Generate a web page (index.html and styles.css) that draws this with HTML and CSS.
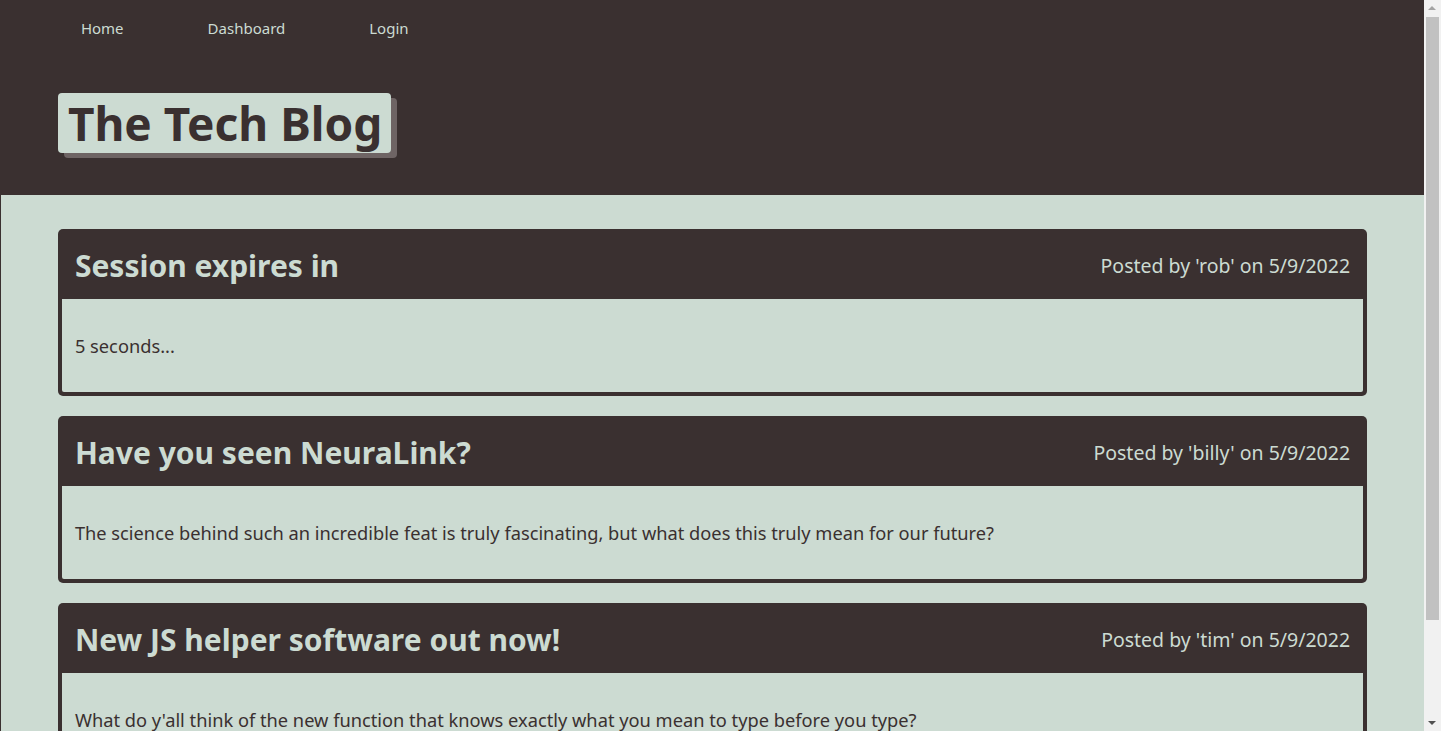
FILE: index.html
```html
<!DOCTYPE html>
<html lang="en">
<head>
<meta charset="utf-8">
<title>The Tech Blog</title>
<link rel="stylesheet" href="styles.css">
</head>
<body>
<div class="page">
  <header class="site-header">
    <nav class="nav">
      <a class="nav-link" href="#">Home</a>
      <a class="nav-link" href="#">Dashboard</a>
      <a class="nav-link" href="#">Login</a>
    </nav>
    <h1 class="brand">The Tech Blog</h1>
  </header>
  <main class="posts">
    <article class="post">
      <div class="post-head">
        <h2 class="post-title">Session expires in</h2>
        <span class="post-meta">Posted by 'rob' on 5/9/2022</span>
      </div>
      <div class="post-body"><p>5 seconds...</p></div>
    </article>
    <article class="post">
      <div class="post-head">
        <h2 class="post-title">Have you seen NeuraLink?</h2>
        <span class="post-meta">Posted by 'billy' on 5/9/2022</span>
      </div>
      <div class="post-body"><p>The science behind such an incredible feat is truly fascinating, but what does this truly mean for our future?</p></div>
    </article>
    <article class="post">
      <div class="post-head">
        <h2 class="post-title">New JS helper software out now!</h2>
        <span class="post-meta">Posted by 'tim' on 5/9/2022</span>
      </div>
      <div class="post-body"><p>What do y'all think of the new function that knows exactly what you mean to type before you type?</p></div>
    </article>
  </main>
</div>
<div class="scrollbar" aria-hidden="true">
  <div class="sb-arrow sb-up"></div>
  <div class="sb-track"><div class="sb-thumb"></div></div>
  <div class="sb-arrow sb-down"></div>
</div>
</body>
</html>
```
FILE: styles.css
```css
* { box-sizing: border-box; }
html, body { margin: 0; padding: 0; }
body {
  background: #ccdbd2;
  font-family: "Noto Sans", "Open Sans", sans-serif;
  color: #3a3030;
  padding-right: 17px;
}
.page {
  border-left: 1px solid #3a3030;
  min-height: 845px;
}
.site-header {
  background: #3a3030;
  height: 195px;
  padding: 0 4%;
}
.nav {
  display: flex;
  padding-top: 18px;
  padding-left: 23px;
}
.nav-link {
  color: #ccdbd2;
  text-decoration: none;
  font-size: 15px;
  line-height: 20px;
  margin-right: 84px;
}
.brand {
  display: inline-block;
  margin: 55px 0 0 0;
  background: #ccdbd2;
  color: #3a3030;
  font-size: 46px;
  line-height: 60px;
  font-weight: 700;
  padding: 0 9px 0 10px;
  border-radius: 4px;
  box-shadow: 6px 5px 0 #6e6464;
}
.posts {
  padding: 34px 4% 75px;
  display: flex;
  flex-direction: column;
  gap: 20px;
}
.post {
  border-radius: 5px;
  overflow: hidden;
  background: #3a3030;
}
.post-head {
  height: 70px;
  display: flex;
  align-items: center;
  justify-content: space-between;
  padding: 2px 17px 0;
}
.post-title {
  margin: 0;
  font-size: 30px;
  font-weight: 700;
  color: #ccdbd2;
}
.post-meta {
  color: #ccdbd2;
  font-size: 19.5px;
}
.post-body {
  background: #ccdbd2;
  margin: 0 4px 4px;
  height: 93px;
  display: flex;
  align-items: center;
  padding: 0 13px;
  border-radius: 0 0 2px 2px;
}
.post-body p {
  margin: 0;
  font-size: 18.25px;
}
.scrollbar {
  position: fixed;
  top: 0;
  right: 0;
  width: 17px;
  height: 100vh;
  background: #f1f1f1;
  display: flex;
  flex-direction: column;
}
.sb-arrow {
  height: 17px;
  flex: none;
  position: relative;
}
.sb-arrow::after {
  content: "";
  position: absolute;
  left: 4px;
  border-left: 4px solid transparent;
  border-right: 4px solid transparent;
}
.sb-up::after {
  top: 6px;
  border-bottom: 4px solid #a3a3a3;
}
.sb-down::after {
  top: 7px;
  border-top: 4px solid #505050;
}
.sb-track {
  flex: 1;
  padding: 0 2px;
}
.sb-thumb {
  height: 603px;
  background: #c1c1c1;
}
```
